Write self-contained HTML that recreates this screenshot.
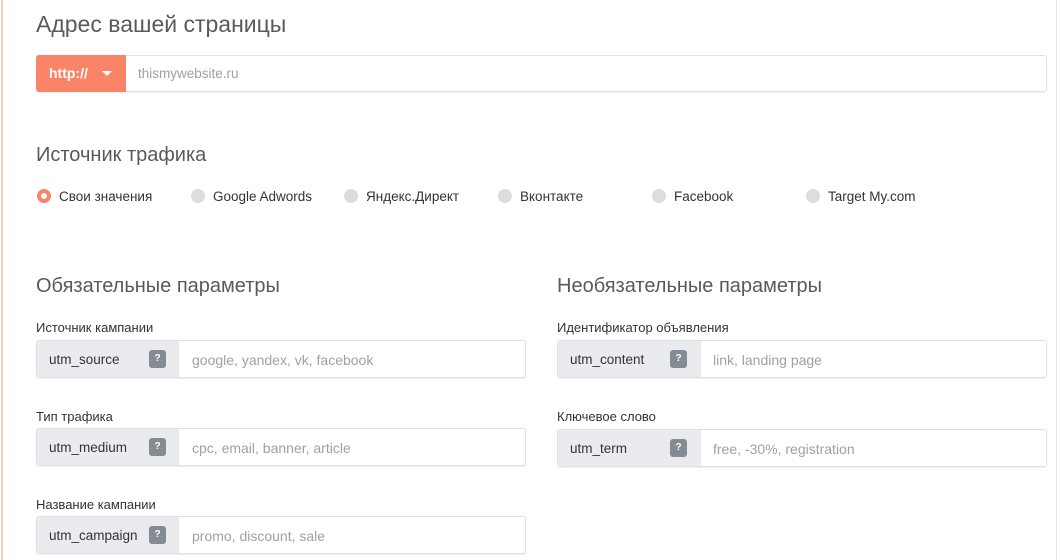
<!DOCTYPE html>
<html><head><meta charset="utf-8"><style>
*{margin:0;padding:0;box-sizing:border-box}
body{width:1060px;height:560px;background:#fff;font-family:"Liberation Sans","DejaVu Sans",sans-serif;position:relative;overflow:hidden;color:#333}
.a{position:absolute}
.lline{left:1px;top:0;width:2px;height:560px;background:#f3cfc8}
.rline{left:1056px;top:0;width:1px;height:560px;background:#e6e6e6}
h1,h2{position:absolute;font-weight:normal;color:#5a5a5a}
.url{left:36px;top:55px;width:1011px;height:37px;border:1px solid #e2e2e2;border-radius:3px;box-shadow:0 1px 1px #eee}
.http{position:absolute;left:-1px;top:-1px;width:90px;height:37px;background:#f98467;border-radius:3px 0 0 3px;color:#fff;font-size:14px;font-weight:bold;line-height:37px;padding-left:13px}
.http:after{content:"";position:absolute;left:66px;top:16px;border-left:5px solid transparent;border-right:5px solid transparent;border-top:5px solid #fff}
.ph{color:#a0a0a0;font-size:14px}
.rad{position:absolute;top:190px;font-size:13.5px;color:#333;line-height:14px}
.rad i{position:absolute;left:-22px;top:-1px;width:14px;height:14px;border-radius:50%;background:#ddd}
.rad i.on{background:#fff;border:4px solid #f98467}
.lbl{position:absolute;font-size:13px;color:#333}
.inp{position:absolute;height:38px;border:1px solid #e0e0e0;border-radius:3px;box-shadow:0 1px 1px #eee}
.inp .p{position:absolute;left:0;top:0;bottom:0;background:#e9ebee;font-size:13.5px;line-height:38px;padding-left:12px;color:#333;border-radius:3px 0 0 3px}
.inp .q{position:absolute;top:9px;width:17px;height:18px;background:#858b93;border-radius:3px;color:#fff;font-size:10px;font-weight:bold;text-align:center;line-height:18px}
.inp .t{position:absolute;top:0;line-height:38px}
</style></head><body>
<div class="a lline"></div><div class="a rline"></div>
<h1 style="left:36px;top:11px;font-size:23px">Адрес вашей страницы</h1>
<div class="a url"><div class="http">http://</div><span class="a ph" style="left:101px;top:10px;font-size:13.5px">thismywebsite.ru</span></div>
<h2 style="left:36px;top:144px;font-size:20px">Источник трафика</h2>
<div class="rad" style="left:59px"><i class="on"></i>Свои значения</div>
<div class="rad" style="left:213px"><i></i>Google Adwords</div>
<div class="rad" style="left:366px"><i></i>Яндекс.Директ</div>
<div class="rad" style="left:520px"><i></i>Вконтакте</div>
<div class="rad" style="left:674px"><i></i>Facebook</div>
<div class="rad" style="left:828px"><i></i>Target My.com</div>
<h2 style="left:36px;top:275px;font-size:20px">Обязательные параметры</h2>
<h2 style="left:557px;top:275px;font-size:20px">Необязательные параметры</h2>

<div class="lbl" style="left:36px;top:320px">Источник кампании</div>
<div class="inp" style="left:36px;top:340px;width:490px"><div class="p" style="width:142px">utm_source</div><div class="q" style="left:112px">?</div><span class="t ph" style="left:155px">google, yandex, vk, facebook</span></div>
<div class="lbl" style="left:36px;top:409px">Тип трафика</div>
<div class="inp" style="left:36px;top:428px;width:490px"><div class="p" style="width:142px">utm_medium</div><div class="q" style="left:112px">?</div><span class="t ph" style="left:155px">cpc, email, banner, article</span></div>
<div class="lbl" style="left:36px;top:497px">Название кампании</div>
<div class="inp" style="left:36px;top:516px;width:490px"><div class="p" style="width:142px">utm_campaign</div><div class="q" style="left:112px">?</div><span class="t ph" style="left:155px">promo, discount, sale</span></div>

<div class="lbl" style="left:557px;top:320px">Идентификатор объявления</div>
<div class="inp" style="left:557px;top:340px;width:490px"><div class="p" style="width:143px">utm_content</div><div class="q" style="left:112px">?</div><span class="t ph" style="left:155px">link, landing page</span></div>
<div class="lbl" style="left:557px;top:409px">Ключевое слово</div>
<div class="inp" style="left:557px;top:429px;width:490px"><div class="p" style="width:143px">utm_term</div><div class="q" style="left:112px">?</div><span class="t ph" style="left:155px">free, -30%, registration</span></div>
</body></html>
